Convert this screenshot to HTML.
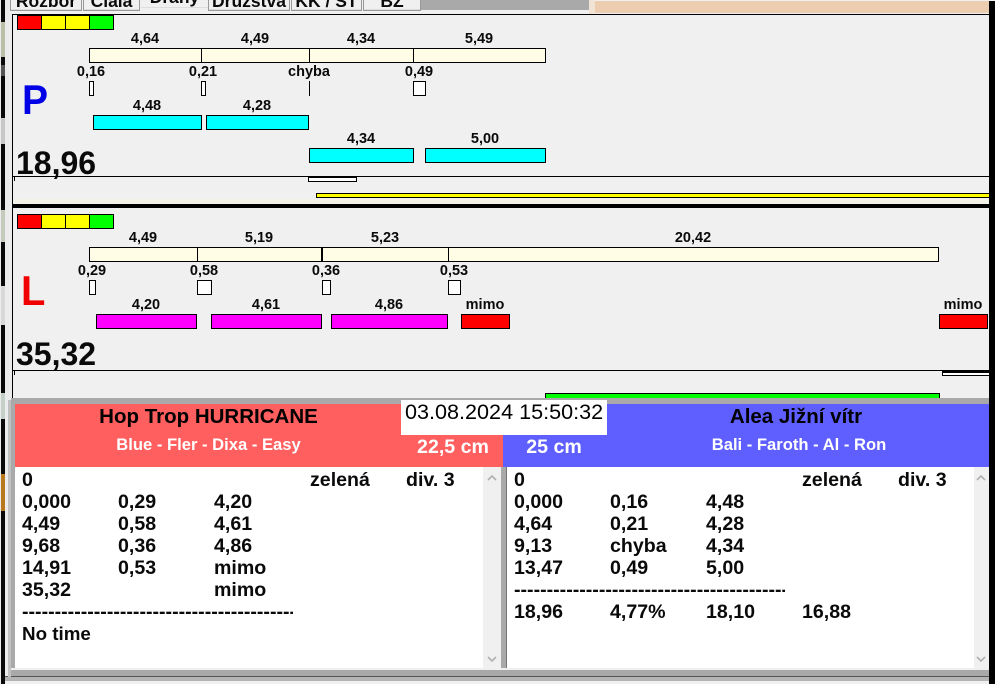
<!DOCTYPE html>
<html><head><meta charset="utf-8"><style>
html,body{margin:0;padding:0}
body{width:995px;height:684px;overflow:hidden;position:relative;background:#f0f0f0;font-family:"Liberation Sans",sans-serif;font-weight:bold;color:#0a0a0a}
div{position:absolute;box-sizing:border-box}
.b{border:1px solid #000}
.t{font-size:14.5px;line-height:16px;width:80px;text-align:center;white-space:nowrap;margin-top:1px}
.c{background:#fffde6}.y{background:#00ffff}.m{background:#ff00ff}.r{background:#ff0000}.w{background:#fff}
.l{font-size:19.6px;line-height:22px;white-space:nowrap}
.tab{top:-7px;height:18px;background:#f0f0f0;border:1px solid #999;font-size:17.5px;line-height:15px;text-align:center;overflow:hidden;font-weight:bold;box-shadow:inset 0 -1px #ddd}
.p{left:1px;width:4px}
</style></head><body>
<!-- left chrome -->
<div style="left:0;top:0;width:12px;height:684px;background:#ececec"></div>
<div style="left:1px;top:0;width:4px;height:684px;background:#0a0a0a"></div>
<div class="p" style="top:22px;height:35px;background:#b9bfa8"></div>
<div class="p" style="top:65px;height:11px;background:#555"></div>
<div class="p" style="top:118px;height:26px;background:#c8c8c8"></div>
<div class="p" style="top:210px;height:32px;background:#c4cabc"></div>
<div class="p" style="top:286px;height:39px;background:#d8d8d8"></div>
<div class="p" style="top:393px;height:26px;background:#c4d0c8"></div>
<div class="p" style="top:474px;height:37px;background:#b8781e"></div>
<!-- top strip -->
<div style="left:12px;top:0;width:983px;height:14px;background:#f0f0f0"></div>
<div style="left:421px;top:0;width:168px;height:10px;background:#a9a9a9"></div>
<div style="left:589px;top:0;width:6px;height:14px;background:#f2e4d4"></div>
<div style="left:595px;top:1px;width:394px;height:12px;background:#eccdb0"></div>
<div class="tab" style="left:10px;width:72px">Rozbor</div>
<div class="tab" style="left:83px;width:57px">Cíala</div>
<div class="tab" style="left:141px;width:67px;top:-10px;border:0">Dráhy</div>
<div class="tab" style="left:208px;width:82px">Družstva</div>
<div class="tab" style="left:291px;width:71px">KK / ST</div>
<div class="tab" style="left:363px;width:58px">BZ</div>
<div style="left:12px;top:14px;width:977px;height:1px;background:#000"></div>
<div style="left:12px;top:14px;width:1px;height:385px;background:#000"></div>
<div style="left:989px;top:1px;width:6px;height:683px;background:#000"></div>

<!-- Panel P -->
<div class="b r" style="left:17px;top:15px;width:25px;height:15px"></div>
<div class="b" style="left:41px;top:15px;width:25px;height:15px;background:#ff0"></div>
<div class="b" style="left:65px;top:15px;width:25px;height:15px;background:#ff0"></div>
<div class="b" style="left:89px;top:15px;width:25px;height:15px;background:#0f0"></div>
<div class="t" style="left:105px;top:30px">4,64</div>
<div class="t" style="left:215px;top:30px">4,49</div>
<div class="t" style="left:321px;top:30px">4,34</div>
<div class="t" style="left:439px;top:30px">5,49</div>
<div class="b c" style="left:89px;top:48px;width:457px;height:15px"></div>
<div style="left:201px;top:48px;width:1px;height:15px;background:#000"></div>
<div style="left:309px;top:48px;width:1px;height:15px;background:#000"></div>
<div style="left:413px;top:48px;width:1px;height:15px;background:#000"></div>
<div class="t" style="left:51px;top:63px">0,16</div>
<div class="t" style="left:163px;top:63px">0,21</div>
<div class="t" style="left:269px;top:63px">chyba</div>
<div class="t" style="left:379px;top:63px">0,49</div>
<div class="b w" style="left:89px;top:81px;width:5px;height:15px"></div>
<div class="b w" style="left:201px;top:81px;width:5px;height:15px"></div>
<div style="left:309px;top:81px;width:1px;height:15px;background:#000"></div>
<div class="b w" style="left:413px;top:81px;width:13px;height:15px"></div>
<div style="left:22px;top:77px;font-size:42px;line-height:46px;color:#0000e6;transform:scaleX(.93);transform-origin:0 0">P</div>
<div class="t" style="left:107px;top:97px">4,48</div>
<div class="t" style="left:217px;top:97px">4,28</div>
<div class="b y" style="left:93px;top:115px;width:109px;height:15px"></div>
<div class="b y" style="left:206px;top:115px;width:103px;height:15px"></div>
<div class="t" style="left:321px;top:130px">4,34</div>
<div class="t" style="left:445px;top:130px">5,00</div>
<div class="b y" style="left:309px;top:148px;width:105px;height:15px"></div>
<div class="b y" style="left:425px;top:148px;width:121px;height:15px"></div>
<div style="left:16px;top:145px;font-size:32px;line-height:36px;white-space:nowrap">18,96</div>
<div style="left:12px;top:176px;width:977px;height:1px;background:#000"></div>
<div style="left:14px;top:177px;width:1px;height:4px;background:#000"></div>
<div class="b w" style="left:308px;top:177px;width:49px;height:5px"></div>
<div class="b" style="left:316px;top:193px;width:673px;height:5px;background:#ff0;border-right:0"></div>
<div style="left:13px;top:199px;width:976px;height:5px;background:#f2f2e8"></div>
<div style="left:12px;top:204px;width:977px;height:4px;background:#000"></div>

<!-- Panel L -->
<div class="b r" style="left:17px;top:214px;width:25px;height:15px"></div>
<div class="b" style="left:41px;top:214px;width:25px;height:15px;background:#ff0"></div>
<div class="b" style="left:65px;top:214px;width:25px;height:15px;background:#ff0"></div>
<div class="b" style="left:89px;top:214px;width:25px;height:15px;background:#0f0"></div>
<div class="t" style="left:103px;top:229px">4,49</div>
<div class="t" style="left:219px;top:229px">5,19</div>
<div class="t" style="left:345px;top:229px">5,23</div>
<div class="t" style="left:653px;top:229px">20,42</div>
<div class="b c" style="left:89px;top:247px;width:850px;height:15px"></div>
<div style="left:197px;top:247px;width:1px;height:15px;background:#000"></div>
<div style="left:321px;top:247px;width:2px;height:15px;background:#000"></div>
<div style="left:448px;top:247px;width:1px;height:15px;background:#000"></div>
<div class="t" style="left:52px;top:262px">0,29</div>
<div class="t" style="left:164px;top:262px">0,58</div>
<div class="t" style="left:286px;top:262px">0,36</div>
<div class="t" style="left:414px;top:262px">0,53</div>
<div class="b w" style="left:89px;top:280px;width:7px;height:15px"></div>
<div class="b w" style="left:197px;top:280px;width:15px;height:15px"></div>
<div class="b w" style="left:322px;top:280px;width:9px;height:15px"></div>
<div class="b w" style="left:448px;top:280px;width:13px;height:15px"></div>
<div style="left:21px;top:268px;font-size:42px;line-height:46px;color:#f00000;transform:scaleX(.95);transform-origin:0 0">L</div>
<div class="t" style="left:106px;top:296px">4,20</div>
<div class="t" style="left:226px;top:296px">4,61</div>
<div class="t" style="left:349px;top:296px">4,86</div>
<div class="t" style="left:445px;top:296px">mimo</div>
<div class="t" style="left:923px;top:296px">mimo</div>
<div class="b m" style="left:96px;top:314px;width:101px;height:15px"></div>
<div class="b m" style="left:211px;top:314px;width:111px;height:15px"></div>
<div class="b m" style="left:331px;top:314px;width:117px;height:15px"></div>
<div class="b r" style="left:461px;top:314px;width:49px;height:15px"></div>
<div class="b r" style="left:939px;top:314px;width:49px;height:15px"></div>
<div style="left:16px;top:336px;font-size:32px;line-height:36px;white-space:nowrap">35,32</div>
<div style="left:12px;top:370px;width:977px;height:1px;background:#000"></div>
<div style="left:14px;top:371px;width:1px;height:4px;background:#000"></div>
<div class="b w" style="left:942px;top:371px;width:47px;height:5px;border-top-width:2px;border-right:0"></div>
<div class="b" style="left:545px;top:393px;width:395px;height:6px;background:#0f0;border-bottom:0"></div>

<!-- bottom section -->
<div style="left:12px;top:398px;width:977px;height:6px;background:#a9a9a9"></div>
<div style="left:11px;top:398px;width:4px;height:286px;background:#a9a9a9"></div>
<div style="left:15px;top:404px;width:488px;height:63px;background:#ff5f5f"></div>
<div style="left:503px;top:404px;width:486px;height:63px;background:#5f5fff"></div>
<div style="left:15px;top:467px;width:468px;height:201px;background:#fff"></div>
<div style="left:483px;top:467px;width:18px;height:201px;background:#f0f0f0"></div>
<div style="left:501px;top:467px;width:5px;height:203px;background:#a9a9a9"></div>
<div style="left:506px;top:467px;width:1px;height:201px;background:#777"></div>
<div style="left:507px;top:467px;width:467px;height:201px;background:#fff"></div>
<div style="left:974px;top:467px;width:15px;height:201px;background:#f0f0f0"></div>
<div style="left:11px;top:668px;width:978px;height:2px;background:#efefef"></div>
<div style="left:11px;top:670px;width:978px;height:6px;background:#a9a9a9"></div>
<div style="left:5px;top:676px;width:984px;height:1px;background:#555"></div>
<div style="left:5px;top:677px;width:984px;height:4px;background:#b4b4b4"></div>
<div style="left:5px;top:681px;width:984px;height:3px;background:#f0f0f0"></div>
<div style="left:8px;top:400px;width:3px;height:277px;background:#c0c0c0"></div>

<!-- scroll arrows -->
<svg style="position:absolute;left:483px;top:467px" width="18" height="201"><path d="M5 13l4-4 4 4M5 190l4 4 4-4" fill="none" stroke="#b0b0b0" stroke-width="1.6"/></svg>
<svg style="position:absolute;left:973px;top:467px" width="16" height="201"><path d="M4 13l4-4 4 4M4 190l4 4 4-4" fill="none" stroke="#b0b0b0" stroke-width="1.6"/></svg>

<div style="left:15px;top:405px;width:387px;text-align:center;font-size:20.5px;line-height:24px;color:#000;white-space:nowrap">Hop Trop HURRICANE</div>
<div style="left:15px;top:435px;width:387px;text-align:center;font-size:16.6px;line-height:20px;color:#fff;white-space:nowrap">Blue - Fler - Dixa - Easy</div>
<div style="left:586px;top:405px;width:420px;text-align:center;font-size:20.5px;line-height:24px;color:#000;white-space:nowrap">Alea Jižní vítr</div>
<div style="left:599px;top:435px;width:400px;text-align:center;font-size:16.6px;line-height:20px;color:#fff;white-space:nowrap">Bali - Faroth - Al - Ron</div>
<div style="left:401px;top:400px;width:206px;height:35px;background:#fff;font-weight:normal;font-size:21.6px;line-height:24px;padding-left:4px;color:#000;white-space:nowrap">03.08.2024 15:50:32</div>
<div style="left:403px;top:436px;width:100px;text-align:center;font-size:19.6px;line-height:22px;color:#fff;white-space:nowrap">22,5 cm</div>
<div style="left:504px;top:436px;width:100px;text-align:center;font-size:19.6px;line-height:22px;color:#fff;white-space:nowrap">25 cm</div>

<!-- left list -->
<div class="l" style="left:22px;top:469px">0</div>
<div class="l" style="left:310px;top:469px">zelená</div>
<div class="l" style="left:406px;top:469px">div. 3</div>
<div class="l" style="left:22px;top:491px">0,000</div><div class="l" style="left:118px;top:491px">0,29</div><div class="l" style="left:214px;top:491px">4,20</div>
<div class="l" style="left:22px;top:513px">4,49</div><div class="l" style="left:118px;top:513px">0,58</div><div class="l" style="left:214px;top:513px">4,61</div>
<div class="l" style="left:22px;top:535px">9,68</div><div class="l" style="left:118px;top:535px">0,36</div><div class="l" style="left:214px;top:535px">4,86</div>
<div class="l" style="left:22px;top:557px">14,91</div><div class="l" style="left:118px;top:557px">0,53</div><div class="l" style="left:214px;top:557px">mimo</div>
<div class="l" style="left:22px;top:579px">35,32</div><div class="l" style="left:214px;top:579px">mimo</div>
<div class="l" style="left:22px;top:601px;width:271px;overflow:hidden">---------------------------------------------</div>
<div class="l" style="left:22px;top:623px;font-size:18.8px">No time</div>

<!-- right list -->
<div class="l" style="left:514px;top:469px">0</div>
<div class="l" style="left:802px;top:469px">zelená</div>
<div class="l" style="left:898px;top:469px">div. 3</div>
<div class="l" style="left:514px;top:491px">0,000</div><div class="l" style="left:610px;top:491px">0,16</div><div class="l" style="left:706px;top:491px">4,48</div>
<div class="l" style="left:514px;top:513px">4,64</div><div class="l" style="left:610px;top:513px">0,21</div><div class="l" style="left:706px;top:513px">4,28</div>
<div class="l" style="left:514px;top:535px">9,13</div><div class="l" style="left:610px;top:535px">chyba</div><div class="l" style="left:706px;top:535px">4,34</div>
<div class="l" style="left:514px;top:557px">13,47</div><div class="l" style="left:610px;top:557px">0,49</div><div class="l" style="left:706px;top:557px">5,00</div>
<div class="l" style="left:514px;top:579px;width:271px;overflow:hidden">---------------------------------------------</div>
<div class="l" style="left:514px;top:601px">18,96</div><div class="l" style="left:610px;top:601px">4,77%</div><div class="l" style="left:706px;top:601px">18,10</div><div class="l" style="left:802px;top:601px">16,88</div>
</body></html>
